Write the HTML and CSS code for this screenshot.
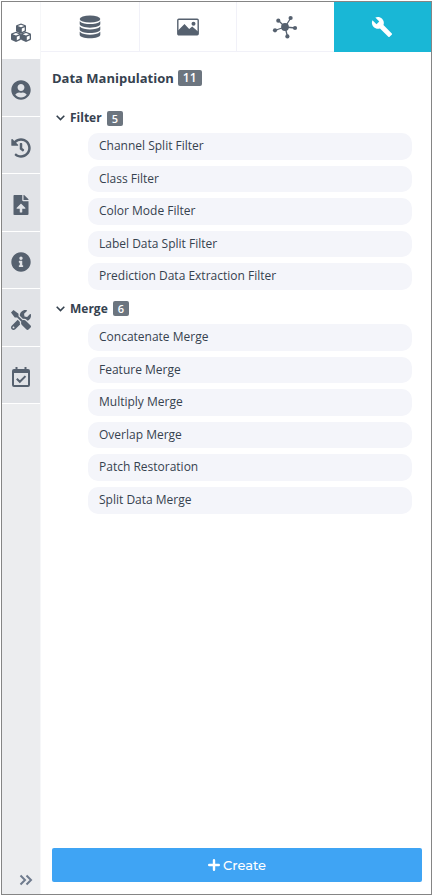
FILE: index.html
```html
<!DOCTYPE html>
<html lang="en">
<head>
<meta charset="utf-8">
<meta name="viewport" content="width=device-width, initial-scale=1">
<title>Data Manipulation</title>
<link rel="stylesheet" href="styles.css">
</head>
<body>
<div class="app">
  <nav class="sidebar" aria-label="Sections">
    <div class="side-tabs">
      <button class="side-tab active" type="button" aria-label="Blocks">
        <svg class="icon" viewBox="0 0 20 20">
          <defs>
            <g id="cube">
              <path fill="currentColor" d="M5 0l4.600 1.800.4.7v5l-.5.8L5 10.300.5 8.300 0 7.500v-5l.4-.7z"/>
              <path fill="#fff" d="M5 1.300l3.200 1.200L5 3.700 1.800 2.500zM5.800 5l2.900-1.200v3.300L5.800 8.600z"/>
            </g>
          </defs>
          <use href="#cube" x="5" y="0.500"/>
          <use href="#cube" x="0" y="8.700"/>
          <use href="#cube" x="10" y="8.700"/>
        </svg>
      </button>
      <button class="side-tab" type="button" aria-label="Account">
        <svg class="icon" viewBox="0 0 496 512"><path fill="currentColor" d="M248 8C111 8 0 119 0 256s111 248 248 248 248-111 248-248S385 8 248 8zm0 96c48.600 0 88 39.400 88 88s-39.400 88-88 88-88-39.400-88-88 39.400-88 88-88zm0 344c-58.700 0-111.300-26.600-146.500-68.200 18.800-35.400 55.600-59.800 98.500-59.800 2.400 0 4.800.4 7.100 1.100 13 4.200 26.600 6.900 40.900 6.900 14.300 0 28-2.700 40.900-6.900 2.300-.7 4.700-1.100 7.100-1.100 42.900 0 79.700 24.400 98.500 59.800C359.300 421.400 306.700 448 248 448z"/></svg>
      </button>
      <button class="side-tab" type="button" aria-label="History">
        <svg class="icon" viewBox="0 0 512 512"><path fill="currentColor" d="M504 255.531c.253 136.640-111.180 248.372-247.820 248.468-59.015.042-113.223-20.530-155.822-54.911-11.077-8.940-11.905-25.541-1.839-35.607l11.267-11.267c8.609-8.609 22.353-9.551 31.891-1.984C173.062 425.135 212.781 440 256 440c101.705 0 184-82.311 184-184 0-101.705-82.311-184-184-184-48.814 0-93.149 18.969-126.068 49.932l50.754 50.754c10.080 10.080 2.941 27.314-11.313 27.314H24c-8.837 0-16-7.163-16-16V38.627c0-14.254 17.234-21.393 27.314-11.314l49.372 49.372C129.209 34.136 189.552 8 256 8c136.810 0 247.747 110.780 248 247.531zm-180.912 78.784l9.823-12.630c8.138-10.463 6.253-25.542-4.210-33.679L288 256.349V152c0-13.255-10.745-24-24-24h-16c-13.255 0-24 10.745-24 24v135.651l65.409 50.874c10.463 8.137 25.541 6.253 33.679-4.210z"/></svg>
      </button>
      <button class="side-tab" type="button" aria-label="Upload">
        <svg class="icon" viewBox="0 0 384 512"><path fill="currentColor" d="M224 136V0H24C10.700 0 0 10.700 0 24v464c0 13.300 10.700 24 24 24h336c13.300 0 24-10.700 24-24V160H248c-13.200 0-24-10.800-24-24zm65.180 216.010H224v80c0 8.840-7.160 16-16 16h-32c-8.840 0-16-7.160-16-16v-80H94.820c-14.280 0-21.410-17.290-11.270-27.360l96.420-95.700c6.650-6.610 17.390-6.610 24.040 0l96.420 95.700c10.150 10.070 3.030 27.360-11.250 27.360zM377 105L279.100 7c-4.500-4.500-10.600-7-17-7H256v128h128v-6.100c0-6.300-2.500-12.400-7-16.900z"/></svg>
      </button>
      <button class="side-tab" type="button" aria-label="Information">
        <svg class="icon" viewBox="0 0 512 512"><path fill="currentColor" d="M256 8C119.043 8 8 119.083 8 256c0 136.997 111.043 248 248 248s248-111.003 248-248C504 119.083 392.957 8 256 8zm0 110c23.196 0 42 18.804 42 42s-18.804 42-42 42-42-18.804-42-42 18.804-42 42-42zm56 254c0 6.627-5.373 12-12 12h-88c-6.627 0-12-5.373-12-12v-24c0-6.627 5.373-12 12-12h12v-64h-12c-6.627 0-12-5.373-12-12v-24c0-6.627 5.373-12 12-12h64c6.627 0 12 5.373 12 12v100h12c6.627 0 12 5.373 12 12v24z"/></svg>
      </button>
      <button class="side-tab" type="button" aria-label="Tools">
        <svg class="icon" viewBox="0 0 512 512"><path fill="currentColor" d="M501.100 395.700L384 278.600c-23.100-23.100-57.600-27.600-85.400-13.900L192 158.100V96L64 0 0 64l96 128h62.100l106.600 106.600c-13.600 27.800-9.200 62.300 13.900 85.400l117.100 117.100c14.600 14.600 38.200 14.600 52.700 0l52.700-52.700c14.500-14.600 14.500-38.200 0-52.700zM331.700 225c28.300 0 54.900 11 74.900 31l19.400 19.400c15.800-6.900 30.800-16.500 43.800-29.500 37.100-37.100 49.700-89.300 37.900-136.700-2.200-9-13.500-12.100-20.100-5.500l-74.400 74.400-67.900-11.300L334 98.900l74.400-74.400c6.600-6.600 3.400-17.900-5.700-20.200-47.400-11.700-99.600.9-136.600 37.900-28.500 28.500-41.900 66.100-41.200 103.600l82.100 82.100c8.100-1.900 16.500-2.900 24.700-2.900zm-103.900 82l-56.700-56.700L18.700 402.800c-25 25-25 65.500 0 90.500s65.500 25 90.500 0l123.600-123.600c-7.600-19.900-9.900-41.600-5-62.700zM64 472c-13.200 0-24-10.800-24-24 0-13.300 10.700-24 24-24s24 10.700 24 24c0 13.200-10.700 24-24 24z"/></svg>
      </button>
      <button class="side-tab" type="button" aria-label="Schedule">
        <svg class="icon" viewBox="0 0 20 20">
          <path fill="currentColor" fill-rule="evenodd" d="M4.500 0h2v2h7V0h2v2H17a2 2 0 0 1 2 2v14a2 2 0 0 1-2 2H3a2 2 0 0 1-2-2V4a2 2 0 0 1 2-2h1.500zM3 6v12h14V6z"/>
          <path fill="none" stroke="currentColor" stroke-width="2" d="M5.800 11.800l3 3 5.700-5.700"/>
        </svg>
      </button>
    </div>
    <button class="expand" type="button" aria-label="Expand sidebar">
      <svg viewBox="0 0 14 12" width="14" height="12"><path fill="none" stroke="currentColor" stroke-width="2" d="M1.500 1.500L6 6l-4.500 4.500M7.500 1.500L12 6l-4.500 4.500"/></svg>
    </button>
  </nav>

  <div class="panel">
    <nav class="top-tabs" aria-label="Categories">
      <button class="top-tab" type="button" aria-label="Data">
        <svg viewBox="0 0 22 24" width="22" height="24"><g fill="currentColor">
          <ellipse cx="11" cy="4" rx="10.300" ry="3.600"/>
          <path d="M.7 6.200C3 8.500 7 9.100 11 9.100s8-.6 10.300-2.900v2.900c0 2-4.600 3.600-10.300 3.600S.7 11.100.7 9.100z"/>
          <path d="M.7 11.500C3 13.800 7 14.400 11 14.400s8-.6 10.300-2.900v2.900c0 2-4.600 3.600-10.300 3.600S.7 16.400.7 14.400z"/>
          <path d="M.7 16.800C3 19.100 7 19.700 11 19.700s8-.6 10.300-2.900v2.900c0 2-4.600 3.600-10.300 3.600S.7 21.700.7 19.700z"/>
        </g></svg>
      </button>
      <button class="top-tab" type="button" aria-label="Images">
        <svg viewBox="0 0 22 18" width="22" height="18">
          <rect x="0.800" y="1.300" width="20.400" height="15.400" rx="1" fill="none" stroke="currentColor" stroke-width="1.400"/>
          <path fill="currentColor" d="M1 12.500L7.500 6l4.700 5 3-2.600L21 13.500V17H1z"/>
          <circle cx="16.500" cy="5.700" r="2" fill="currentColor"/>
        </svg>
      </button>
      <button class="top-tab" type="button" aria-label="Networks">
        <svg viewBox="0 0 26 24" width="26" height="24">
          <path stroke="currentColor" stroke-width="1.300" d="M13 12L6.500 5.500M13 12l5.500-8.500M13 12l10.500 1M13 12l2.500 9.500M13 12L2.500 15.500"/>
          <g fill="currentColor"><circle cx="13" cy="12" r="3.900"/><circle cx="6.300" cy="5.700" r="2.100"/><circle cx="18.600" cy="3" r="2.100"/><circle cx="23" cy="13" r="2.100"/><circle cx="15.400" cy="21.400" r="2.100"/><circle cx="3" cy="15.300" r="2.100"/></g>
        </svg>
      </button>
      <button class="top-tab active" type="button" aria-label="Utilities">
        <svg viewBox="0 0 24 24" width="22" height="22"><path fill="currentColor" d="M22.700 19l-9.100-9.100c.9-2.300.4-5-1.500-6.900-2-2-5-2.400-7.400-1.300L9 6 6 9 1.600 4.700C.4 7.100.9 10.100 2.900 12.100c1.900 1.900 4.600 2.400 6.900 1.500l9.100 9.100c.4.4 1 .4 1.400 0l2.300-2.300c.5-.4.5-1.100.1-1.400z"/></svg>
      </button>
    </nav>

    <main class="content">
      <h1 class="title">Data Manipulation <span class="badge">11</span></h1>

      <section class="group">
        <h2><button class="group-head" type="button" aria-expanded="true">
          <svg viewBox="0 0 9 6" width="9" height="6"><path fill="none" stroke="currentColor" stroke-width="1.600" d="M.7.8l3.800 3.800L8.300.8"/></svg>
          <span>Filter</span> <span class="badge small">5</span>
        </button></h2>
        <ul class="items">
          <li>Channel Split Filter</li>
          <li>Class Filter</li>
          <li>Color Mode Filter</li>
          <li>Label Data Split Filter</li>
          <li>Prediction Data Extraction Filter</li>
        </ul>
      </section>

      <section class="group">
        <h2><button class="group-head" type="button" aria-expanded="true">
          <svg viewBox="0 0 9 6" width="9" height="6"><path fill="none" stroke="currentColor" stroke-width="1.600" d="M.7.8l3.800 3.800L8.300.8"/></svg>
          <span>Merge</span> <span class="badge small">6</span>
        </button></h2>
        <ul class="items">
          <li>Concatenate Merge</li>
          <li>Feature Merge</li>
          <li>Multiply Merge</li>
          <li>Overlap Merge</li>
          <li>Patch Restoration</li>
          <li>Split Data Merge</li>
        </ul>
      </section>
    </main>

    <footer class="footer">
      <button class="create" type="button">
        <svg viewBox="0 0 12 12" width="12" height="12"><path stroke="currentColor" stroke-width="2.400" stroke-linecap="round" d="M6 1.200v9.600M1.200 6h9.600"/></svg>
        Create
      </button>
    </footer>
  </div>
</div>
</body>
</html>
```
FILE: styles.css
```css
* {
  box-sizing: border-box;
}

body {
  margin: 0;
  padding: 1px 1px 0;
  background: #fff;
  color: #36424f;
  font-family: "Open Sans", "Noto Sans", sans-serif;
  font-size: 12px;
  line-height: 1.55;
}

button {
  margin: 0;
  padding: 0;
  border: 0;
  background: none;
  color: inherit;
  font: inherit;
  cursor: pointer;
}

svg {
  display: block;
  flex: none;
}

.app {
  display: flex;
  min-height: calc(100vh - 1px);
  border: 1px solid #858585;
}

.sidebar {
  display: flex;
  flex-direction: column;
  justify-content: space-between;
  flex: 0 0 39px;
  border-right: 1px solid #f6f7f9;
  background: #ecedef;
  color: #56616f;
}

.side-tabs {
  display: grid;
  grid-auto-rows: 1fr;
  min-height: 402px;
}

.side-tab {
  display: flex;
  align-items: center;
  justify-content: center;
  padding-top: 5px;
  border-bottom: 1px solid #fff;
  background: #e1e3e7;
}

.side-tab.active {
  background: #fff;
}

.icon {
  width: 20px;
  height: 20px;
}

.expand {
  display: flex;
  align-items: center;
  justify-content: flex-end;
  height: 28px;
  padding-right: 7px;
  color: #6f7b8d;
}

.panel {
  display: flex;
  flex: 1;
  flex-direction: column;
  min-width: 0;
}

.top-tabs {
  display: grid;
  grid-template-columns: repeat(4, 1fr);
  height: 50px;
}

.top-tab {
  display: flex;
  align-items: center;
  justify-content: center;
  border-bottom: 1px solid #f1f1f8;
  color: #56616f;
}

.top-tab + .top-tab {
  border-left: 1px solid #f1f1f8;
}

.top-tab + .top-tab.active {
  border: 0;
  background: #19b7d6;
  color: #fff;
}

.content {
  flex: 1;
  padding: 16px 19px 16px 11px;
}

h2 {
  margin: 0;
  font-size: 12px;
}

.title {
  display: flex;
  align-items: center;
  gap: 4px;
  margin: 0 0 20px;
  font-size: 13px;
  line-height: 20px;
}

.badge {
  padding: 0 5px;
  border-radius: 2px;
  background: #6c757f;
  color: #fff;
  font-size: 12px;
  font-weight: 600;
  line-height: 16px;
}

.badge.small {
  font-size: 11px;
  line-height: 15px;
}

.group + .group {
  margin-top: 9px;
}

.group-head {
  display: flex;
  align-items: center;
  gap: 5px;
  padding-left: 4px;
  height: 20px;
  font-weight: 700;
}

.items {
  display: grid;
  gap: 6px;
  margin: 5px 0 0;
  padding: 0 0 0 36px;
  list-style: none;
}

.items li {
  padding: 4px 11px;
  border-radius: 10px;
  background: #f4f5fa;
  font-size: 12px;
}

.footer {
  padding: 0 9px 12px 11px;
}

.create {
  display: flex;
  align-items: center;
  justify-content: center;
  gap: 3px;
  width: 100%;
  height: 34px;
  border-radius: 2px;
  background: #3fa4f4;
  color: #fff;
  font-family: Montserrat, Inter, sans-serif;
  font-size: 13px;
  font-weight: 500;
}
```
